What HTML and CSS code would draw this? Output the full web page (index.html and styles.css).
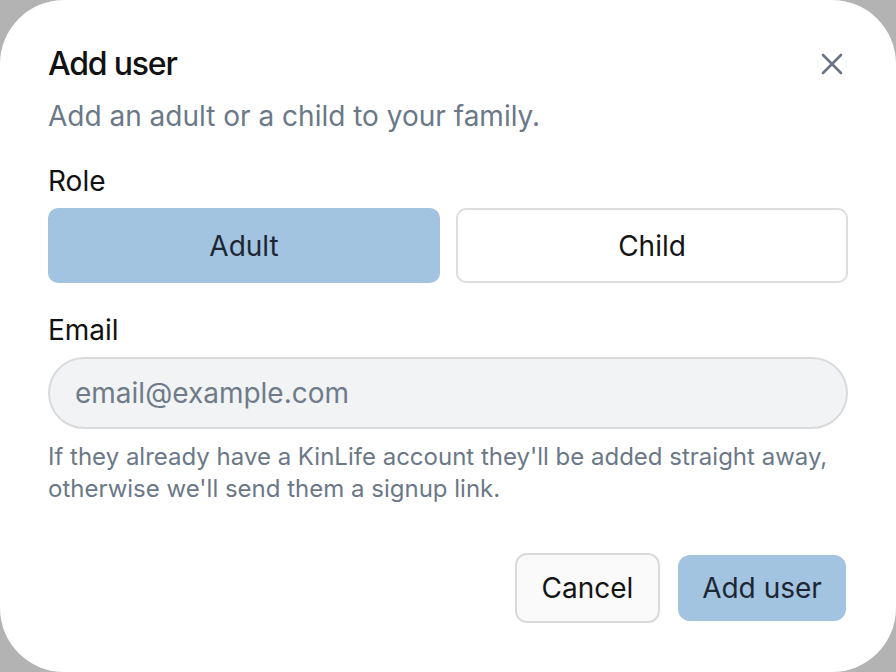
FILE: index.html
```html
<!DOCTYPE html>
<html lang="en">
<head>
<meta charset="utf-8">
<title>Add user</title>
<link rel="stylesheet" href="styles.css">
</head>
<body>
<div class="dialog">
  <div class="header">
    <h1 class="title">Add user</h1>
    <button class="close" aria-label="Close">
      <svg width="24" height="24" viewBox="0 0 24 24"><path d="M3 3L21 21M21 3L3 21" stroke="#687585" stroke-width="2.6" stroke-linecap="round" fill="none"/></svg>
    </button>
  </div>
  <p class="subtitle">Add an adult or a child to your family.</p>

  <div class="label">Role</div>
  <div class="roles">
    <button class="role role-active">Adult</button>
    <button class="role">Child</button>
  </div>

  <div class="label label-email">Email</div>
  <input class="email" type="email" placeholder="email@example.com">
  <p class="help">If they already have a KinLife account they'll be added straight away, otherwise we'll send them a signup link.</p>

  <div class="footer">
    <button class="btn btn-cancel">Cancel</button>
    <button class="btn btn-primary">Add user</button>
  </div>
</div>
</body>
</html>
```

FILE: styles.css
```css
* { box-sizing: border-box; }
html, body {
  margin: 0;
  padding: 0;
  background: #b3b3b3;
  font-family: Inter, "Noto Sans", sans-serif;
}
.dialog {
  width: 896px;
  height: 672px;
  background: #ffffff;
  border-radius: 64px;
  padding: 44px 48px 0 48px;
  display: flex;
  flex-direction: column;
}
.header {
  display: flex;
  justify-content: space-between;
  align-items: center;
  height: 40px;
}
.title {
  margin: 0;
  font-size: 32px;
  line-height: 40px;
  font-weight: 500;
  letter-spacing: -1.2px;
  color: #111111;
}
.close {
  border: 0;
  background: none;
  padding: 0;
  width: 24px;
  height: 24px;
  margin-right: 4px;
  display: flex;
  align-items: center;
  justify-content: center;
}
.subtitle {
  margin: 14px 0 0 0;
  font-size: 28px;
  line-height: 36px;
  color: #6b7888;
}
.label {
  margin-top: 29px;
  font-size: 28px;
  line-height: 36px;
  color: #111111;
}
.roles {
  margin-top: 9px;
  display: flex;
  gap: 16px;
}
.role {
  flex: 1;
  height: 75px;
  border-radius: 10px;
  border: 2px solid #dcdddd;
  background: #ffffff;
  font-family: inherit;
  font-size: 28px;
  color: #141414;
}
.role-active {
  background: #a3c4e1;
  border-color: #a3c4e1;
  color: #1d2733;
}
.label-email { margin-top: 29px; }
.email {
  margin-top: 9px;
  width: 100%;
  height: 72px;
  border-radius: 36px;
  border: 2px solid #d8dadc;
  background: #f2f3f5;
  padding: 0 25px;
  font-family: inherit;
  font-size: 28px;
  color: #111;
  outline: none;
}
.email::placeholder { color: #6f7b89; }
.help {
  margin: 12px 0 0 0;
  font-size: 24px;
  line-height: 32px;
  color: #6b7888;
}
.footer {
  margin-top: 48px;
  display: flex;
  justify-content: flex-end;
  align-items: center;
  gap: 18px;
  padding-right: 2px;
}
.btn {
  font-family: inherit;
  font-size: 28px;
  border-radius: 12px;
  height: 66px;
}
.btn-cancel {
  height: 70px;
  width: 145px;
  background: #fafafa;
  border: 2px solid #d9dbdb;
  color: #141414;
}
.btn-primary {
  width: 168px;
  background: #a3c4e1;
  border: 0;
  color: #1d2733;
}
```
